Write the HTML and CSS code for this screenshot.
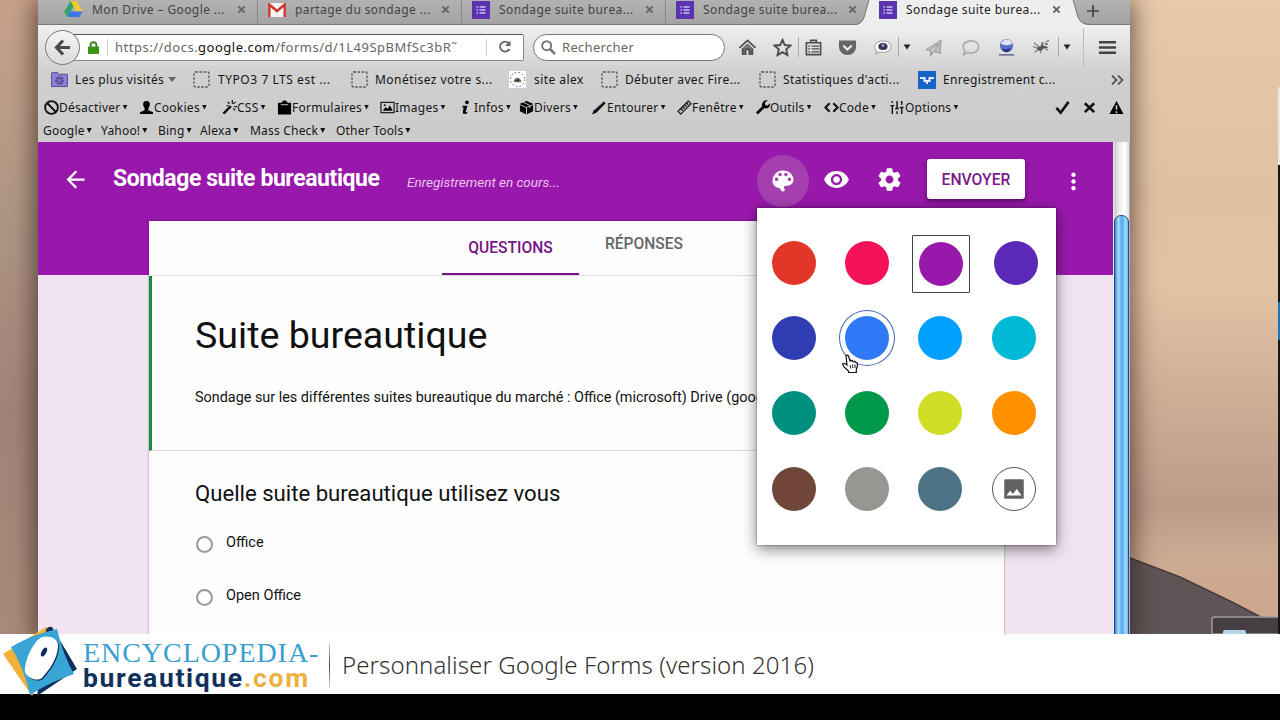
FILE: index.html
```
<!DOCTYPE html>
<html lang="fr">
<head>
    <meta charset="UTF-8" />
    <title>Sondage suite bureautique</title>
    <link rel="stylesheet" href="styles.css">
</head>
<body>
<svg class="defs" width="0" height="0">
    <symbol id="close" viewBox="0 0 10 10"><path d="M1.500 1.500l7 7M8.500 1.500l-7 7" stroke="#666" stroke-width="2.200"/></symbol>
    <symbol id="form" viewBox="0 0 18 18"><path fill="#5b33b0" d="M0 0h18v18H0z"/><path d="M4.500 6H6M7.500 6h6M4.500 9H6M7.500 9h6M4.500 12H6M7.500 12h6" stroke="#d0c2ee" stroke-width="1.300"/></symbol>
    <symbol id="blank" viewBox="0 0 17 17"><rect x="1" y="1" width="15" height="15" rx="1.500" fill="none" stroke="#555" stroke-width="1.300" stroke-dasharray="2.500 1.500"/></symbol>
</svg>

<div class="desktop">
    <svg class="scenery" width="150" height="634" viewBox="0 0 150 634">
        <path d="M0 558l50 19 52 25 48 25v7H0z" fill="#5f5556"/>
        <path d="M0 558l50 19 52 25 48 25" fill="none" stroke="#463c3d" stroke-width="1.500"/>
        <path d="M82 634v-15q0-2 3-2h65v17z" fill="#453f43" stroke="#a09a9b" stroke-width="1.500"/>
        <path d="M93 634v-2q0-2 2-2h19q2 0 2 2v2z" fill="#b9d5ea"/>
        <path d="M148 87h2v78h-2z" fill="#e8e8e6"/>
        <path d="M148 165h2v469h-2z" fill="#151719"/>
        <path d="M148 302h2v38h-2z" fill="#1d75ae"/>
    </svg>

    <div class="window">
        <div class="tabs">
            <div class="tab first">
                <svg width="19" height="17" viewBox="0 0 19 17"><path fill="#f7ca2c" d="M6.500 0h6l6 10.500h-6z"/><path fill="#34a466" d="M6.500 0l3 5.300L3.300 16 .2 10.800z"/><path fill="#3978e5" d="M6.300 10.500h12.200L15.400 16H3.300z"/></svg>
                <span>Mon Drive – Google ...</span>
                <svg class="x"><use href="#close"/></svg>
            </div>
            <div class="tab">
                <svg width="18" height="14" viewBox="0 0 18 14"><path fill="#f5f5f5" d="M0 0h18v14H0z"/><path fill="none" stroke="#cf3a35" stroke-width="2.500" d="M1.300 14V1.500L9 8l7.700-6.500V14"/></svg>
                <span>partage du sondage ...</span>
                <svg class="x"><use href="#close"/></svg>
            </div>
            <div class="tab">
                <svg width="18" height="18"><use href="#form"/></svg>
                <span>Sondage suite burea...</span>
                <svg class="x"><use href="#close"/></svg>
            </div>
            <div class="tab last">
                <svg width="18" height="18"><use href="#form"/></svg>
                <span>Sondage suite burea...</span>
                <svg class="x"><use href="#close"/></svg>
            </div>
            <div class="tab active">
                <svg class="tab-shape" width="236" height="26" viewBox="0 0 236 26"><path d="M0 25C8 24 9 18 11 10L14 0h204l3 10c2 9 4 15 15 15v1H0z" fill="#eeeeee"/><path d="M0 24.500C8 24 9 18 11 10L14 0m204 0l3 10c2 9 4 14.500 15 14.500" fill="none" stroke="#777"/></svg>
                <svg width="18" height="18"><use href="#form"/></svg>
                <span>Sondage suite burea...</span>
                <svg class="x"><use href="#close"/></svg>
            </div>
            <svg class="plus" width="12" height="12" viewBox="0 0 12 12"><path d="M6 0v12M0 6h12" stroke="#444" stroke-width="1.700"/></svg>
        </div>

        <div class="navbar">
            <div class="back"><svg width="17" height="17" viewBox="0 0 17 17"><path d="M9 1.500L2.500 8.500 9 15.500M3 8.500h13" fill="none" stroke="#4b4b4b" stroke-width="3.200"/></svg></div>
            <div class="url">
                <svg class="lock" width="11" height="13" viewBox="0 0 12 14"><path d="M0 6h12v8H0z" fill="#3c9216"/><path d="M2.800 7V4.500a3.200 3.200 0 0 1 6.400 0V7" fill="none" stroke="#3c8420" stroke-width="2"/></svg>
                <span class="address">https://docs.<b>google.com</b>/forms/d/1L49SpBMfSc3bR˜</span>
                <svg class="reload" width="14" height="14" viewBox="0 0 14 14"><path d="M10.500 3A5 5 0 1 0 11.500 9" fill="none" stroke="#666" stroke-width="1.800"/><path d="M12.500.500v5.500H7z" fill="#666"/></svg>
            </div>
            <div class="search">
                <svg width="15" height="15" viewBox="0 0 15 15"><circle cx="5.700" cy="5.700" r="4.500" fill="none" stroke="#777" stroke-width="2"/><path d="M9 9l5 5" stroke="#777" stroke-width="2.500"/></svg>
                <span>Rechercher</span>
            </div>
            <div class="tools">
                <svg viewBox="0 0 20 20"><path d="M4 11l6-5.500 6 5.500v7h-4v-6H8v6H4z" fill="#777"/><path d="M1.500 10.500L10 2.500l8.500 8M5 11v7M15 11v7M8 18v-6h4v6" fill="none" stroke="#4b4b4b" stroke-width="1.800"/></svg>
                <svg viewBox="0 0 20 20"><path d="M10 2l2.400 5.400 5.900.6-4.400 4 1.300 5.900-5.200-3.100L4.800 17.900l1.300-5.900L1.700 8l5.900-.6z" fill="none" stroke="#4b4b4b" stroke-width="2"/></svg>
                <i class="sep"></i>
                <svg viewBox="0 0 20 20"><path d="M2.500 5h15v12.500h-15zM7 5V2.500h6V5" fill="none" stroke="#4b4b4b" stroke-width="1.700"/><path d="M4.500 8.500h2M8 8.500h8M4.500 11.500h2M8 11.500h8M4.500 14.500h2M8 14.500h8" stroke="#4b4b4b" stroke-width="1.300"/></svg>
                <svg viewBox="0 0 20 20"><path d="M1 2.500h18v7a9 8.500 0 0 1-18 0z" fill="#666"/><path d="M5.500 8l4.500 4.200L14.500 8" fill="none" stroke="#eee" stroke-width="2.200"/></svg>
                <svg viewBox="0 0 20 20"><path d="M10.500 3C16 3 19 5.500 19 9s-3 6.200-8.500 6.200C9 15.200 8 15 7 14.700L3 17l.8-3.500C-1 9.500 2.500 3 10.500 3z" fill="#f6f6f6" stroke="#999"/><ellipse cx="10.500" cy="9" rx="4.800" ry="3.700" fill="#343552"/><circle cx="10.500" cy="8" r="1.500" fill="#98a5dd"/></svg>
                <i class="sep"></i>
                <svg class="small" viewBox="0 0 8 6"><path d="M.5.500h7L4 5.500z" fill="#222"/></svg>
                <svg viewBox="0 0 20 20"><path d="M18 2L2 12.500l5 .5L15.500 6 10 14l7 2.500z" fill="#bbb" stroke="#999"/><path d="M7 13v5l3-3.500" fill="none" stroke="#999" stroke-width="1.500"/></svg>
                <svg viewBox="0 0 20 20"><path d="M10.500 3c5 0 8 2.800 8 6.500s-3.500 6.500-8 6.500c-2 0-3-.5-3.500-.7L3 17.500l1.200-4C-.5 9 4 3 10.500 3z" fill="none" stroke="#aaa" stroke-width="1.700"/></svg>
                <svg viewBox="0 0 20 20"><circle cx="10" cy="8" r="7" fill="#5a6fc4"/><path d="M4 6q3-5 7-4.500T16 6q-6 3-12 0" fill="#dfe5fb"/><path d="M5 11q5 2.500 10-1-2 5-5 5t-5-4" fill="#27307a"/><path d="M2 17h16v1.500H2z" fill="#5a5d90"/></svg>
                <svg viewBox="0 0 20 20"><path d="M5 11q1-3 4-2 1-4 4-4t4 1.500l-4 2q3 0 4 2l-5 .5q-1 3-4 2.500T5 11z" fill="#555"/><path d="M2 5l5 4M1 9l5 2M3 15l3-2.500M9 16v-3M11 4l-1 3M15 4l3-1.500M14 11l3 2" stroke="#777" stroke-width="1.200"/><circle cx="13" cy="7" r="1.500" fill="#ddd"/></svg>
                <i class="sep"></i>
                <svg class="small" viewBox="0 0 8 6"><path d="M.5.500h7L4 5.500z" fill="#222"/></svg>
                <i class="sep tall"></i>
                <svg viewBox="0 0 20 20"><path d="M1 4.500h18M1 10h18M1 15.500h18" stroke="#444" stroke-width="2.600"/></svg>
            </div>
        </div>

        <div class="bookmarks">
            <div><svg viewBox="0 0 18 17"><path d="M.5 2.500Q.5 1 2 1h5l1 2h9.500v13H.5z" fill="#8d80cf" stroke="#54499b"/><circle cx="9" cy="9.500" r="3.500" fill="none" stroke="#4d4393" stroke-width="2" stroke-dasharray="2 1"/><circle cx="9" cy="9.500" r="2" fill="none" stroke="#4d4393"/></svg><span class="visited">Les plus visités</span><i class="caret grey"></i></div>
            <div><svg><use href="#blank"/></svg><span>TYPO3 7 LTS est ...</span></div>
            <div><svg><use href="#blank"/></svg><span>Monétisez votre s...</span></div>
            <div><svg viewBox="0 0 18 18"><path d="M0 0h18v18H0z" fill="#fff"/><circle cx="9" cy="9" r="7.500" fill="none" stroke="#444" stroke-dasharray="1.500 2.500"/><path d="M5 10q4-6 8 0v2H5z" fill="#876"/><path d="M7 9h4v2H7z" fill="#332"/></svg><span>site alex</span></div>
            <div><svg><use href="#blank"/></svg><span>Débuter avec Fire...</span></div>
            <div><svg><use href="#blank"/></svg><span>Statistiques d'acti...</span></div>
            <div><svg viewBox="0 0 18 18"><path d="M0 0h18v18H0z" fill="#1763c6"/><path d="M2 7h4.500v3h5V7H16M9 10v3" fill="none" stroke="#e8f1ff" stroke-width="2"/></svg><span>Enregistrement c...</span></div>
            <svg class="more" viewBox="0 0 13 10"><path d="M1 .5L5.500 5 1 9.500M7 .5L11.500 5 7 9.500" fill="none" stroke="#555" stroke-width="1.800"/></svg>
        </div>

        <div class="devbar">
            <div><svg viewBox="0 0 16 16"><circle cx="8" cy="8" r="6.800" fill="none" stroke="#111" stroke-width="2"/><path d="M3.500 3.500l9 9" stroke="#111" stroke-width="2"/></svg><span>Désactiver</span><i class="caret"></i></div>
            <div><svg viewBox="0 0 16 16"><path d="M8 1c3 0 4 2 3.500 4.500L10 9v2l5 2v2H1v-2l5-2V9L4.500 5.500C4 3 5 1 8 1z"/></svg><span>Cookies</span><i class="caret"></i></div>
            <div><svg viewBox="0 0 16 16"><path d="M1.500 14.500l8-8" stroke="#111" stroke-width="2.500"/><path d="M11 0v4M13 7h3M6 2l2 2M14.500 2L12 4M12 9l2 2M5 6h2" stroke="#111" stroke-width="1.300"/></svg><span>CSS</span><i class="caret"></i></div>
            <div><svg viewBox="0 0 16 16"><path d="M1 3h4V2l2-1.500h2L11 2v1h4v12.500H1z"/><path d="M4 5h8" stroke="#ccc"/></svg><span>Formulaires</span><i class="caret"></i></div>
            <div><svg viewBox="0 0 16 16"><path d="M1 2.500h14v11H1z" fill="none" stroke="#222" stroke-width="1.300"/><path d="M3 11.500l3-4 2 2 2.500-4 3 6z"/><circle cx="5" cy="5.500" r="1"/></svg><span>Images</span><i class="caret"></i></div>
            <div><svg viewBox="0 0 16 16"><circle cx="8.500" cy="2.500" r="2"/><path d="M4 6h5l-2 7 2-.5-.5 2Q4 16 4 13l1-5H3.500z"/></svg><span>Infos</span><i class="caret"></i></div>
            <div><svg viewBox="0 0 16 16"><path d="M1 4l7-3 7 3v8l-7 3.500L1 12z"/><path d="M1 5l7 3 7-3M8 8v7M4.500 2.500l7 3.200v3" fill="none" stroke="#ccc"/></svg><span>Divers</span><i class="caret"></i></div>
            <div><svg viewBox="0 0 16 16"><path d="M0 15.500l2-4.500L12.500 1.500l2 2L4.500 13.500z"/><path d="M3 11L12 3" stroke="#888" stroke-width=".7"/></svg><span>Entourer</span><i class="caret"></i></div>
            <div><svg viewBox="0 0 16 16"><path d="M1 12L12 1l3 3L4 15z" fill="#bbb" stroke="#222" stroke-width="1.300"/><path d="M4 9l2 2M6 7l2 2M8 5l2 2M10 3l2 2" stroke="#111" stroke-width="1.500"/></svg><span>Fenêtre</span><i class="caret"></i></div>
            <div><svg viewBox="0 0 16 16"><path d="M2 14.500l8-8" stroke="#111" stroke-width="3"/><path d="M13.500.500L10.500 3l.5 2.500 2.500.3L16 3.500c.5 4-3 6.500-6.500 5L7.500 6.500C7 2.500 10-.5 13.500.500z"/></svg><span>Outils</span><i class="caret"></i></div>
            <div><svg viewBox="0 0 16 16"><path d="M6 3.500L1.500 8 6 12.500M10 3.500L14.500 8 10 12.500" fill="none" stroke="#111" stroke-width="2.300"/></svg><span>Code</span><i class="caret"></i></div>
            <div><svg viewBox="0 0 16 16"><path d="M2.500 1v2M2.500 6v9M7.500 1v8M7.500 12v3M12.500 1v4M12.500 8v7" stroke="#111" stroke-width="1.500"/><path d="M.5 6h4M5.500 9h4M10.500 8h4" stroke="#111" stroke-width="1.500"/></svg><span>Options</span><i class="caret"></i></div>
            <svg viewBox="0 0 16 16"><path d="M1.500 8.500L6 13.500 14.500 2" fill="none" stroke="#111" stroke-width="2.800"/></svg>
            <svg viewBox="0 0 16 16"><path d="M3 3.500l10 9.500M13 3.500L3 13" stroke="#111" stroke-width="2.700"/></svg>
            <svg viewBox="0 0 16 16"><path d="M8 1l7.500 14H.5z"/><path d="M8 5.500v5M8 12v2" stroke="#ddd" stroke-width="1.600"/></svg>
        </div>

        <div class="enginebar">
            <div>Google<i class="caret"></i></div>
            <div>Yahoo!<i class="caret"></i></div>
            <div>Bing<i class="caret"></i></div>
            <div>Alexa<i class="caret"></i></div>
            <div>Mass Check<i class="caret"></i></div>
            <div>Other Tools<i class="caret"></i></div>
        </div>

        <div class="viewport">
            <div class="page">
                <header class="header">
                    <svg class="arrow" width="27" height="27" viewBox="0 0 24 24"><path d="M20 11H7.830l5.590-5.590L12 4l-8 8 8 8 1.410-1.410L7.830 13H20v-2z"/></svg>
                    <h1>Sondage suite bureautique</h1>
                    <em>Enregistrement en cours...</em>
                    <div class="palette-btn"><svg width="28" height="28" viewBox="0 0 24 24"><path d="M12 3c-4.970 0-9 4.030-9 9 0 3.500 2.500 5.500 5.500 6 1 .2 1.500.8 1.700 1.700.2.800.8 1.300 1.800 1.300.83 0 1.500-.67 1.500-1.500 0-.39-.15-.74-.39-1.010-.23-.26-.38-.61-.38-.99 0-.83.67-1.500 1.500-1.500H16c2.760 0 5-2.240 5-5 0-4.420-4.030-8-9-8zm-5.500 9c-.83 0-1.500-.67-1.500-1.500S5.670 9 6.500 9 8 9.670 8 10.500 7.330 12 6.500 12zm3-4C8.670 8 8 7.330 8 6.500S8.670 5 9.500 5s1.500.67 1.500 1.500S10.330 8 9.500 8zm5 0c-.83 0-1.500-.67-1.500-1.500S13.670 5 14.500 5s1.500.67 1.500 1.500S15.330 8 14.500 8zm3 4c-.83 0-1.500-.67-1.500-1.500S16.670 9 17.500 9s1.500.67 1.500 1.500-.67 1.500-1.500 1.500z"/></svg></div>
                    <svg class="eye" width="27" height="27" viewBox="0 0 24 24"><path d="M12 4.500C7 4.500 2.730 7.610 1 12c1.730 4.390 6 7.500 11 7.500s9.270-3.110 11-7.500c-1.730-4.390-6-7.500-11-7.500zM12 17c-2.760 0-5-2.240-5-5s2.240-5 5-5 5 2.240 5 5-2.240 5-5 5zm0-8c-1.660 0-3 1.340-3 3s1.340 3 3 3 3-1.340 3-3-1.340-3-3-3z"/></svg>
                    <svg class="gear" width="27" height="27" viewBox="0 0 24 24"><path d="M19.430 12.980c.04-.32.07-.64.07-.98s-.03-.66-.07-.98l2.110-1.650c.19-.15.24-.42.12-.64l-2-3.460c-.12-.22-.39-.3-.61-.22l-2.490 1c-.52-.4-1.080-.73-1.690-.98l-.38-2.650C14.460 2.180 14.250 2 14 2h-4c-.25 0-.46.18-.49.42l-.38 2.650c-.61.25-1.170.59-1.690.98l-2.490-1c-.23-.09-.49 0-.61.22l-2 3.460c-.13.22-.07.49.12.64l2.110 1.650c-.04.32-.07.65-.07.98s.03.66.07.98l-2.110 1.650c-.19.15-.24.42-.12.64l2 3.460c.12.22.39.3.61.22l2.490-1c.52.4 1.080.73 1.690.98l.38 2.650c.03.24.24.42.49.42h4c.25 0 .46-.18.49-.42l.38-2.650c.61-.25 1.170-.59 1.690-.98l2.490 1c.23.09.49 0 .61-.22l2-3.460c.12-.22.07-.49-.12-.64l-2.110-1.650zM12 15.500c-1.930 0-3.500-1.570-3.500-3.500s1.570-3.500 3.500-3.500 3.500 1.570 3.500 3.500-1.570 3.500-3.500 3.500z"/></svg>
                    <button class="send">ENVOYER</button>
                    <svg class="dots" width="27" height="27" viewBox="0 0 24 24"><path d="M12 8c1.100 0 2-.9 2-2s-.9-2-2-2-2 .9-2 2 .9 2 2 2zm0 2c-1.100 0-2 .9-2 2s.9 2 2 2 2-.9 2-2-.9-2-2-2zm0 6c-1.100 0-2 .9-2 2s.9 2 2 2 2-.9 2-2-.9-2-2-2z"/></svg>
                </header>

                <main class="card">
                    <nav class="card-tabs">
                        <div class="current">QUESTIONS</div>
                        <div>RÉPONSES</div>
                    </nav>
                    <section class="intro">
                        <h2>Suite bureautique</h2>
                        <p>Sondage sur les différentes suites bureautique du marché : Office (microsoft) Drive (google)</p>
                    </section>
                    <section class="question">
                        <h3>Quelle suite bureautique utilisez vous</h3>
                        <div class="choice"><i></i>Office</div>
                        <div class="choice"><i></i>Open Office</div>
                    </section>
                </main>

                <div class="colors">
                    <b class="red"></b><b class="pink"></b><b class="purple"></b><b class="violet"></b>
                    <b class="indigo"></b><b class="blue"></b><b class="sky"></b><b class="cyan"></b>
                    <b class="teal"></b><b class="green"></b><b class="lime"></b><b class="orange"></b>
                    <b class="brown"></b><b class="grey"></b><b class="slate"></b>
                    <b class="image"><svg width="26" height="26" viewBox="0 0 24 24"><path d="M21 20V4c0-.6-.4-1-1-1H4c-.6 0-1 .4-1 1v16c0 .6.4 1 1 1h16c.6 0 1-.4 1-1zM8.500 13.500l2.500 3.010L14.500 12l4.500 6H5l3.500-4.500z"/></svg></b>
                </div>

                <svg class="cursor" width="18" height="20" viewBox="0 0 18 20"><path d="M5 1.500q1.500-1 2.500.5l1.500 5 2-.5 1 1 2-.2.500 1 1.500.2.500 3-1.200 4v3H7.500v-1.500L3 13 1.500 10q1-1.500 3 0L6 11z" fill="#fff" stroke="#111" stroke-width="1.200"/><path d="M9 11l.8 3.500M11.500 10.500l.5 3.500M14 10.500v3.500" stroke="#222"/></svg>
            </div>
            <div class="scrollbar"><div class="thumb"></div></div>
        </div>
    </div>
</div>

<div class="banner">
    <svg class="mouse" width="78" height="71" viewBox="0 0 78 71">
        <path d="M1 28l43-27 16 19-30 50z" fill="#f2b13b"/>
        <path d="M44 4q2-4 6-3l25 42-40 27z" fill="#0d2d5c"/>
        <path d="M9 21q20-12 46-18 6 26 17 45-24 8-44 21Q22 42 9 21z" fill="#38a5d5"/>
        <path d="M41 12c9-2 17 2 16 10-1 12-8 22-16 31-5 4-15 0-17-6-1-10 8-31 17-35z" fill="#0d2d5c"/>
        <path d="M40 11c9-2 17 2 16 10-1 12-8 22-16 31-5 4-15 0-17-6-1-10 8-31 17-35z" fill="#fff"/>
        <ellipse cx="42" cy="26" rx="2.300" ry="4.800" transform="rotate(30 42 26)" fill="#0d2d5c"/>
    </svg>
    <div class="brand">
        <div class="top">ENCYCLOPEDIA-</div>
        <div class="bottom">bureautique<span>.com</span></div>
    </div>
    <div class="rule"></div>
    <div class="caption">Personnaliser Google Forms (version 2016)</div>
</div>
</body>
</html>
```

FILE: styles.css
```
* {
    box-sizing: border-box;
}

body {
    margin: 0;
    width: 1280px;
    height: 720px;
    overflow: hidden;
    background: #000;
    font-family: Roboto, sans-serif;
}

.defs {
    position: absolute;
}

.desktop {
    position: relative;
    height: 634px;
    padding-left: 38px;
    overflow: hidden;
    background: linear-gradient(#e8caaa 0, #e0c1a3 30%, #e3c3a5 45%, #c9a791 68%, #bd9b89 80%, #cdaa92 88%, #cba58b 100%);
}

.desktop::before {
    content: "";
    position: absolute;
    left: 0;
    top: 0;
    width: 38px;
    height: 634px;
    background: linear-gradient(#c8a18a 0, #b19885 30%, #a08478 65%, #aa8b79 100%);
}

/* right side of the wallpaper */
.scenery {
    position: absolute;
    left: 1130px;
    top: 0;
}

.window {
    position: relative;
    width: 1092px;
    height: 634px;
    background: linear-gradient(#f0f0f0 25px, #d0d0d0 72px, #cbcbcb 141px);
    box-shadow: 0 4px 22px 4px rgba(40, 20, 15, 0.6);
    font-family: "Noto Sans", sans-serif;
    font-size: 12px;
    color: #151515;
}

/* browser tabs */
.tabs {
    display: grid;
    grid-template-columns: 220px 204px 204px 203px 204px 1fr;
    height: 25px;
    background: linear-gradient(#b2b2b2, #a3a3a3);
    border-bottom: 1px solid #777;
}

.tab {
    position: relative;
    display: flex;
    align-items: center;
    height: 24px;
    padding: 0 11px 5px 10px;
    color: #444;
    white-space: nowrap;
    border-right: 1px solid #888;
}

.tab.first {
    padding-left: 26px;
}

.tab.last,
.tab.active {
    padding-right: 12px;
    border-right: 0;
}

.tab.active {
    color: #222;
}

.tab > svg,
.tab > span {
    position: relative;
}

.tab span {
    flex: 1;
    margin-left: 9px;
    letter-spacing: 0.4px;
}

.tab .x {
    width: 9px;
    height: 9px;
}

.tab .tab-shape {
    position: absolute;
    left: -14px;
    top: 0;
}

.plus {
    margin: 5px 0 0 14px;
}

/* address bar */
.navbar {
    display: flex;
    align-items: center;
    height: 44px;
    padding-left: 7px;
}

.back {
    position: relative;
    z-index: 1;
    display: flex;
    align-items: center;
    justify-content: center;
    width: 35px;
    height: 35px;
    background: linear-gradient(#f6f6f6, #dadada);
    border: 1px solid #777;
    border-radius: 50%;
}

.url {
    display: flex;
    align-items: center;
    width: 462px;
    height: 27px;
    margin-left: -18px;
    padding: 0 11px 0 25px;
    background: #fff;
    border: 1px solid #888;
    border-top-color: #555;
    border-radius: 2px;
}

.address {
    flex: 1;
    height: 17px;
    margin: 0 11px 0 8px;
    padding-left: 7px;
    border-left: 1px solid #ccc;
    border-right: 1px solid #ccc;
    font-size: 13px;
    line-height: 16px;
    letter-spacing: 0.5px;
    color: #666;
    white-space: nowrap;
}

.address b {
    font-weight: normal;
    color: #111;
}

.search {
    display: flex;
    align-items: center;
    width: 192px;
    height: 27px;
    margin-left: 9px;
    padding-left: 7px;
    background: #fff;
    border: 1px solid #777;
    border-radius: 14px;
}

.search span {
    margin-left: 6px;
    font-size: 13px;
    letter-spacing: 0.3px;
    color: #666;
}

.tools {
    display: grid;
    grid-template-columns: 37px 32px 1px 28px 40px 31px 1px 16px 37px 36px 36px 34px 1px 15px 18px 30px;
    justify-items: center;
    align-items: center;
    margin-left: 4px;
}

.tools svg {
    width: 19px;
    height: 19px;
}

.tools .small {
    width: 8px;
    height: 6px;
}

.sep {
    width: 1px;
    height: 20px;
    background: #aaa;
}

.sep.tall {
    height: 38px;
    background: #bbb;
}

/* bookmarks */
.bookmarks {
    display: grid;
    grid-template-columns: 142px 158px 158px 92px 158px 158px 194px 14px;
    align-items: center;
    height: 21px;
    padding-left: 13px;
    letter-spacing: 0.35px;
    white-space: nowrap;
}

.bookmarks div {
    display: flex;
    align-items: center;
}

.bookmarks svg {
    width: 17px;
    height: 17px;
    margin-right: 7px;
}

.bookmarks div:nth-child(2) span {
    margin-left: 1px;
    letter-spacing: 0.55px;
}

.bookmarks div:nth-child(3) span {
    letter-spacing: 0.45px;
}

.bookmarks div:nth-child(4) span {
    margin-left: 1px;
    letter-spacing: 0.45px;
}

.bookmarks div:nth-child(6) span {
    letter-spacing: 0.4px;
}

.bookmarks div:nth-child(7) svg {
    width: 18px;
    height: 18px;
    margin-left: 1px;
}

.bookmarks .more {
    width: 13px;
    height: 10px;
}

.bookmarks .visited {
    letter-spacing: 0.35px;
}

.caret {
    width: 5px;
    height: 5px;
    margin-left: 2px;
    background: #111;
    clip-path: polygon(0 0, 100% 0, 50% 100%);
}

.caret.grey {
    width: 8px;
    margin-left: 4px;
    background: #666;
}

/* web developer toolbar */
.devbar {
    display: grid;
    grid-template-columns: 95px 83px 55px 103px 79px 60px 73px 85px 78px 69px 66px 165px 27px 27px 27px;
    align-items: center;
    height: 34px;
    padding-left: 6px;
    letter-spacing: 0.25px;
}

.devbar div,
.enginebar div {
    display: flex;
    align-items: center;
}

.devbar svg {
    width: 15px;
    height: 15px;
}

.enginebar {
    display: grid;
    grid-template-columns: 58px 57px 42px 50px 86px 100px;
    height: 13px;
    align-items: center;
    margin-top: -2px;
    padding-left: 5px;
    font-size: 12px;
    letter-spacing: 0.2px;
}

/* page */
.viewport {
    display: flex;
    height: 492px;
    margin-top: 7px;
    font-family: Roboto, sans-serif;
}

.page {
    position: relative;
    width: 1075px;
    height: 492px;
    background: #f2e3f2;
    overflow: hidden;
}

.header {
    display: flex;
    align-items: flex-start;
    height: 133px;
    padding: 24px 0 0 24px;
    background: #9918ac;
}

.header > svg,
.palette-btn svg {
    fill: #fff;
}

.header h1 {
    width: 270px;
    margin: -2px 0 0 24px;
    font-size: 23px;
    font-weight: 700;
    line-height: 30px;
    letter-spacing: -0.42px;
    color: #fff;
    white-space: nowrap;
}

.header em {
    width: 350px;
    margin-left: 24px;
    font-size: 13.500px;
    line-height: 33px;
    color: #ecc5f0;
}

.palette-btn {
    display: flex;
    align-items: center;
    justify-content: center;
    width: 52px;
    height: 52px;
    margin-top: -11px;
    background: #a53fb0;
    border-radius: 50%;
}

.eye {
    margin-left: 14px;
}

.gear {
    margin-left: 26px;
}

.send {
    width: 98px;
    height: 40px;
    margin: -7px 0 0 24px;
    padding: 1px 0 0;
    background: #fff;
    border: 0;
    border-radius: 3px;
    box-shadow: 0 2px 4px rgba(0, 0, 0, 0.5);
    font: 500 15.700px Roboto, sans-serif;
    color: #7b1a8b;
}

.dots {
    margin: 2px 0 0 35px;
}

.card {
    width: 855px;
    height: 420px;
    margin: -54px 0 0 111px;
    background: #fefefe;
    box-shadow: 0 0 2px rgba(0, 0, 0, 0.4);
}

.card-tabs {
    display: flex;
    height: 55px;
    padding-left: 293px;
    border-bottom: 1px solid #ddd;
    font-size: 15.600px;
    font-weight: 500;
    line-height: 46px;
    color: #666;
}

.card-tabs div {
    width: 130px;
    text-align: center;
}

.card-tabs .current {
    width: 137px;
    height: 54px;
    line-height: 55px;
    color: #751486;
    border-bottom: 2px solid #751486;
}

.intro {
    height: 175px;
    padding: 37px 0 0 43px;
    border-left: 3px solid #148b43;
    border-bottom: 1px solid #ddd;
    color: #111;
}

.intro h2 {
    margin: 0;
    font-size: 37.600px;
    font-weight: 400;
    line-height: 44px;
}

.intro p {
    margin: 32px 0 0;
    font-size: 14.400px;
    line-height: 18px;
    white-space: nowrap;
}

.question {
    padding: 29px 0 0 46px;
    color: #111;
}

.question h3 {
    margin: 0 0 24px;
    font-size: 22.150px;
    font-weight: 400;
    line-height: 26px;
}

.choice {
    display: flex;
    height: 53px;
    font-size: 14.500px;
    line-height: 25px;
}

.choice i {
    width: 17px;
    height: 17px;
    margin: 6px 13px 0 1px;
    border: 2px solid #999;
    border-radius: 50%;
}

/* theme colour menu over the form */
.colors {
    position: absolute;
    left: 719px;
    top: 66px;
    display: grid;
    grid-template-columns: repeat(4, 73.300px);
    grid-auto-rows: 75.400px;
    place-items: center;
    width: 299px;
    height: 337px;
    padding-top: 17px;
    background: #fff;
    box-shadow: 0 4px 14px rgba(0, 0, 0, 0.5), 0 0 2px rgba(0, 0, 0, 0.5);
}

.colors b {
    width: 44px;
    height: 44px;
    border-radius: 50%;
}

.colors .red { background: #e23728; }
.colors .pink { background: #f51258; }
.colors .violet { background: #5a29b7; margin-left: 5px; }
.colors .indigo { background: #303db2; }
.colors .blue { background: #2f79f6; box-shadow: 0 0 0 5px #fff, 0 0 0 6px #4665b7; }
.colors .sky { background: #02a1ff; }
.colors .cyan { background: #00b9d5; }
.colors .teal { background: #009080; }
.colors .green { background: #009849; }
.colors .lime { background: #cfde24; }
.colors .orange { background: #ff9101; }
.colors .brown { background: #70463b; }
.colors .grey { background: #969692; }
.colors .slate { background: #4d7185; }

/* current theme, with the square focus frame */
.colors .purple {
    width: 58px;
    height: 58px;
    margin: 2px 0 0 2px;
    padding: 6px;
    border: 1px solid #444;
    border-radius: 1px;
}

.colors .purple::before {
    content: "";
    display: block;
    width: 44px;
    height: 44px;
    border-radius: 50%;
    background: #9918ac;
}

.colors .image {
    display: flex;
    align-items: center;
    justify-content: center;
    border: 1px solid #555;
}

.colors .image svg {
    fill: #616161;
}

.cursor {
    position: absolute;
    left: 803px;
    top: 212px;
}

.scrollbar {
    width: 17px;
    height: 492px;
    padding-top: 73px;
    background: linear-gradient(90deg, #f2f2f2 0, #ccc 2px, #eee 6px, #fff 12px, #ddd 16px, #888 17px);
}

.thumb {
    height: 430px;
    margin: 0 1px;
    border: 1px solid #1c4f93;
    border-radius: 7px 7px 0 0;
    background: linear-gradient(90deg, #3b80cf 0, #a5d5fb 3px, #8fcbf9 5px, #57a8ec 6px, #65b4f2 8px, #a4e0ff 11px, #3f79bd 15px);
}

/* title strip under the video */
.banner {
    position: relative;
    display: flex;
    height: 60px;
    background: #fff;
}

.mouse {
    margin: -8px 0 0 2px;
}

.brand {
    width: 249px;
    padding-top: 6px;
    margin-left: 3px;
    white-space: nowrap;
}

.brand .top {
    font: 28px/25px "Liberation Serif", serif;
    letter-spacing: 0.95px;
    color: #3a9fd0;
}

.brand .bottom {
    font: bold 26.500px/25px Roboto, sans-serif;
    letter-spacing: 1.65px;
    color: #12305c;
}

.brand .bottom span {
    color: #eeb03f;
}

.rule {
    width: 1px;
    height: 46px;
    margin: 8px 12px 0 -3px;
    background: linear-gradient(#ddd, #444, #ddd);
}

.caption {
    font: 300 24px/62px "Noto Sans", sans-serif;
    letter-spacing: 0.08px;
    color: #333;
    white-space: nowrap;
}
```
